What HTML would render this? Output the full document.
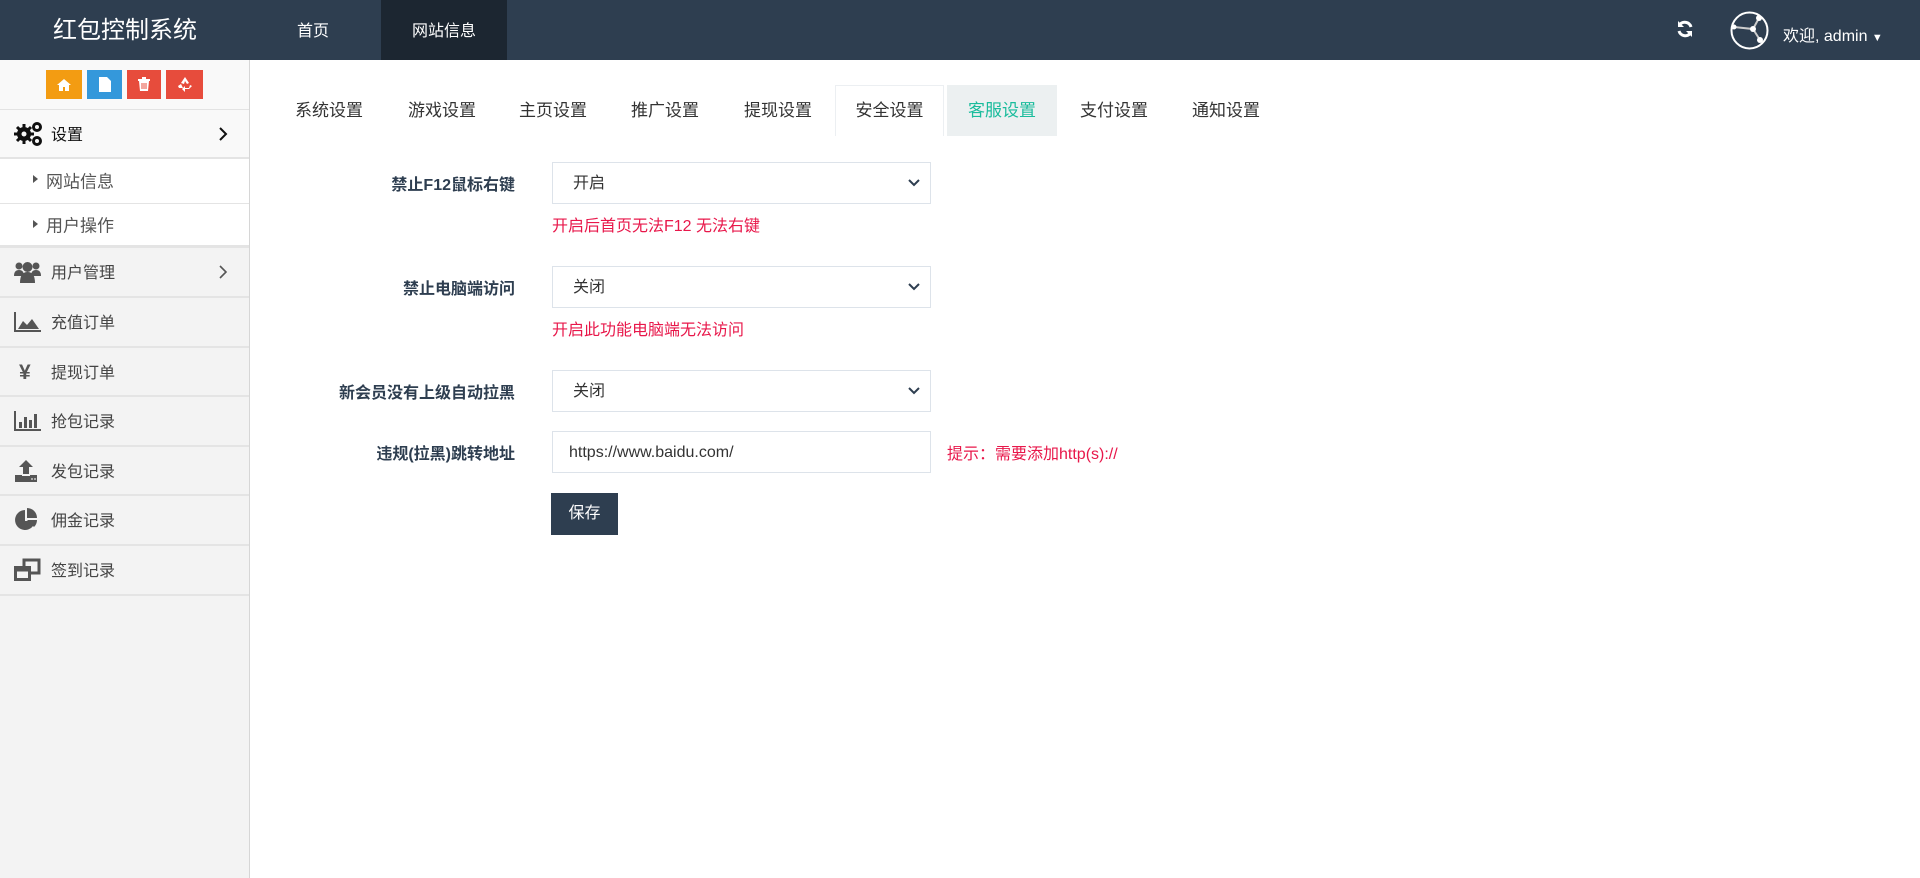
<!DOCTYPE html>
<html><head><meta charset="utf-8"><style>
*{box-sizing:border-box;margin:0;padding:0}
body{width:1920px;height:878px;overflow:hidden;background:#fff;font-family:"Liberation Sans","Noto Sans CJK SC",sans-serif;position:relative;color:#333}
.hd{position:absolute;left:0;top:0;width:1920px;height:60px;background:#2e3e50}
.logo{position:absolute;left:0;top:2px;width:250px;height:60px;line-height:58px;text-align:center;color:#fff;font-size:24px}
.nav{position:absolute;top:0;height:60px;line-height:64px;color:#fff;font-size:16px;text-align:center}
.sb{position:absolute;left:0;top:60px;width:250px;height:818px;background:#f3f3f3;border-right:1px solid #d6d6d6}
.tb{height:50px;background:#f9f9f9;position:relative;border-bottom:1px solid #e3e3e3}
.btn{position:absolute;top:10px;height:29px;color:#fff;text-align:center}
.row{position:absolute;left:0;width:249px;border-bottom:2px solid #e4e4e4;font-size:16px;color:#444}
.row .t{position:absolute;left:51px;top:50%;transform:translateY(-54%)}
.row svg.i{position:absolute;left:14px;top:50%;transform:translateY(-50%)}
.chev{position:absolute;left:218px;top:50%;transform:translateY(-50%)}
.tab{position:absolute;top:85px;height:51px;line-height:51px;width:112px;text-align:center;font-size:17px;color:#333}
.lbl{position:absolute;right:1405px;font-size:16px;font-weight:bold;color:#2e3e50;white-space:nowrap}
.sel{position:absolute;left:552px;width:379px;height:42px;border:1px solid #dde3ea;font-size:16px;color:#333;line-height:42px;padding-left:20px}
.sel svg{position:absolute;right:10px;top:16px}
.hint{position:absolute;left:552px;color:#e8174a;font-size:16px}
</style></head><body>
<div class="hd">
<div class="logo">红包控制系统</div>
<div class="nav" style="left:282px;width:62px">首页</div>
<div class="nav" style="left:381px;width:126px;background:#1c2631">网站信息</div>
<svg style="position:absolute;left:1676px;top:20px" width="18" height="18" viewBox="0 0 18 18"><path d="M15 7A6.5 6.5 0 0 0 3.5 5" stroke="#fff" stroke-width="3" fill="none"/><path d="M2 1v6h6z" fill="#fff"/><path d="M3 11a6.5 6.5 0 0 0 11.5 2" stroke="#fff" stroke-width="3" fill="none"/><path d="M16 17v-6h-6z" fill="#fff"/></svg>
<svg style="position:absolute;left:1730px;top:11px" width="39" height="39" viewBox="0 0 39 39"><circle cx="19.5" cy="19.5" r="18" stroke="#fff" stroke-width="2" fill="none"/><path d="M4 16L23 18L29 7M23 18L30 29" stroke="#ccc" stroke-width="2" fill="none"/><circle cx="23" cy="18" r="3" fill="#fff"/><circle cx="29" cy="7" r="3" fill="#fff"/><circle cx="30" cy="29" r="3" fill="#fff"/><circle cx="4" cy="16" r="2.5" fill="#fff"/></svg>
<div style="position:absolute;left:1783px;top:22px;color:#fff;font-size:16px">欢迎, admin <span style="font-size:11px">▼</span></div>
</div>
<div class="sb">
<div class="tb">
<div class="btn" style="left:46px;width:36px;background:#f39c12"><svg width="14" height="14" viewBox="0 0 14 14" style="margin-top:8px"><path d="M7 1L0 7h2v6h4V9h2v4h4V7h2z" fill="#fff"/></svg></div>
<div class="btn" style="left:87px;width:35px;background:#3498db"><svg width="12" height="15" viewBox="0 0 12 15" style="margin-top:7px"><path d="M0 0h8l4 4v11H0z" fill="#fff"/></svg></div>
<div class="btn" style="left:127px;width:34px;background:#e74c3c"><svg width="12" height="14" viewBox="0 0 12 14" style="margin-top:7px"><path d="M0 2h12v2H0zM4 0h4v2H4zM1 4h10l-1 10H2z" fill="#fff"/><path d="M4 6v6M6 6v6M8 6v6" stroke="#e74c3c"/></svg></div>
<div class="btn" style="left:166px;width:37px;background:#e74c3c"><svg width="16" height="16" viewBox="0 0 16 16" style="margin-top:6px"><path d="M8 1L4 7l3 1 1-3 2 3 2-1zM1 10l3-2 2 4H2zM15 10l-3 3H8v3l-3-3 3-3v2h4l1-3z" fill="#fff"/></svg></div>
</div>
<div class="row" style="top:50px;height:49px;background:#f9f9f9;color:#111"><svg class="i" width="28" height="24" viewBox="0 0 28 24"><circle cx="10" cy="12" r="7" fill="#111"/><path d="M10 2v20M0 12h20M3 5l14 14M17 5L3 19" stroke="#111" stroke-width="3"/><circle cx="10" cy="12" r="2.5" fill="#f9f9f9"/><circle cx="23" cy="5" r="3.5" fill="none" stroke="#111" stroke-width="3"/><circle cx="23" cy="19" r="3.5" fill="none" stroke="#111" stroke-width="3"/></svg><span class="t" style="font-size:16px">设置</span><svg class="chev" width="10" height="16" viewBox="0 0 10 16"><path d="M2 2l6 6-6 6" stroke="#111" stroke-width="2" fill="none"/></svg></div>
<div class="row" style="top:99px;height:45px;background:#fff;border-bottom:1px solid #e4e4e4"><span style="position:absolute;left:33px;top:16px;border-left:5px solid #555;border-top:4px solid transparent;border-bottom:4px solid transparent"></span><span class="t" style="left:46px;font-size:17px;color:#555">网站信息</span></div>
<div class="row" style="top:144px;height:44px;background:#fff;border-bottom:3px solid #e4e4e4"><span style="position:absolute;left:33px;top:16px;border-left:5px solid #555;border-top:4px solid transparent;border-bottom:4px solid transparent"></span><span class="t" style="left:46px;font-size:17px;color:#555">用户操作</span></div>
<div class="row" style="top:188px;height:50px"><svg class="i" width="27" height="22" viewBox="0 0 27 22"><circle cx="5" cy="5" r="3.5" fill="#555"/><circle cx="22" cy="5" r="3.5" fill="#555"/><circle cx="13.5" cy="6" r="5" fill="#555"/><path d="M0 15q0-6 5-6t5 6zM17 15q0-6 5-6t5 6zM6 22q0-11 7.5-11t7.5 11z" fill="#555"/></svg><span class="t">用户管理</span><svg class="chev" width="10" height="16" viewBox="0 0 10 16"><path d="M2 2l6 6-6 6" stroke="#555" stroke-width="1.6" fill="none"/></svg></div>
<div class="row" style="top:238px;height:50px"><svg class="i" width="27" height="20" viewBox="0 0 27 20"><path d="M1 0v19h26" stroke="#555" stroke-width="2" fill="none"/><path d="M4 17l5-8 4 4 5-6 7 10z" fill="#555"/></svg><span class="t">充值订单</span></div>
<div class="row" style="top:288px;height:49px"><span style="position:absolute;left:19px;top:13px;font-size:21px;font-weight:bold;color:#555">¥</span><span class="t">提现订单</span></div>
<div class="row" style="top:337px;height:50px"><svg class="i" width="27" height="20" viewBox="0 0 27 20"><path d="M1 0v19h26" stroke="#555" stroke-width="2" fill="none"/><path d="M5 11h3v6H5zM10 6h3v11h-3zM15 9h3v8h-3zM20 3h3v14h-3z" fill="#555"/></svg><span class="t">抢包记录</span></div>
<div class="row" style="top:387px;height:49px"><svg class="i" width="24" height="22" viewBox="0 0 24 22"><path d="M12 0l7 7h-4v7H9V7H5z M1 15h7v1h8v-1h7v7H1z" fill="#555"/><path d="M17 19h2M20 19h2" stroke="#fff"/></svg><span class="t">发包记录</span></div>
<div class="row" style="top:436px;height:50px"><svg class="i" width="24" height="24" viewBox="0 0 24 24"><path d="M11 2a10 10 0 1 0 10 11H11z" fill="#555"/><path d="M13 0a10 10 0 0 1 10 10H13zM13 12h10a10 10 0 0 1-3 7z" fill="#555"/></svg><span class="t">佣金记录</span></div>
<div class="row" style="top:486px;height:50px"><svg class="i" width="27" height="24" viewBox="0 0 27 24"><rect x="10" y="2" width="15" height="13" fill="none" stroke="#555" stroke-width="3"/><rect x="1.5" y="9.5" width="14" height="12" fill="#f3f3f3" stroke="#555" stroke-width="3"/><rect x="1.5" y="9.5" width="14" height="4" fill="#555"/></svg><span class="t">签到记录</span></div>
</div>

<div class="tab" style="left:273px">系统设置</div>
<div class="tab" style="left:386px">游戏设置</div>
<div class="tab" style="left:497px">主页设置</div>
<div class="tab" style="left:609px">推广设置</div>
<div class="tab" style="left:722px">提现设置</div>
<div class="tab" style="left:835px;width:109px;border:1px solid #eceff2;border-bottom:none;line-height:49px">安全设置</div>
<div class="tab" style="left:947px;width:110px;background:#ecf0f1;color:#1abc9c">客服设置</div>
<div class="tab" style="left:1058px">支付设置</div>
<div class="tab" style="left:1170px">通知设置</div>

<div class="lbl" style="top:171px">禁止F12鼠标右键</div>
<div class="sel" style="top:162px">开启<svg width="12" height="8" viewBox="0 0 12 8"><path d="M1 1l5 5 5-5" stroke="#2e3e50" stroke-width="2" fill="none"/></svg></div>
<div class="hint" style="top:212px">开启后首页无法F12 无法右键</div>

<div class="lbl" style="top:275px">禁止电脑端访问</div>
<div class="sel" style="top:266px">关闭<svg width="12" height="8" viewBox="0 0 12 8"><path d="M1 1l5 5 5-5" stroke="#2e3e50" stroke-width="2" fill="none"/></svg></div>
<div class="hint" style="top:316px">开启此功能电脑端无法访问</div>

<div class="lbl" style="top:379px">新会员没有上级自动拉黑</div>
<div class="sel" style="top:370px">关闭<svg width="12" height="8" viewBox="0 0 12 8"><path d="M1 1l5 5 5-5" stroke="#2e3e50" stroke-width="2" fill="none"/></svg></div>

<div class="lbl" style="top:440px">违规(拉黑)跳转地址</div>
<div class="sel" style="top:431px;padding-left:16px">https://www.baidu.com/</div>
<div style="position:absolute;left:947px;top:440px;color:#e8174a;font-size:16px">提示：需要添加http(s)://</div>

<div style="position:absolute;left:551px;top:493px;width:67px;height:42px;background:#2e3e50;color:#fff;font-size:16px;line-height:42px;text-align:center">保存</div>
</body></html>
